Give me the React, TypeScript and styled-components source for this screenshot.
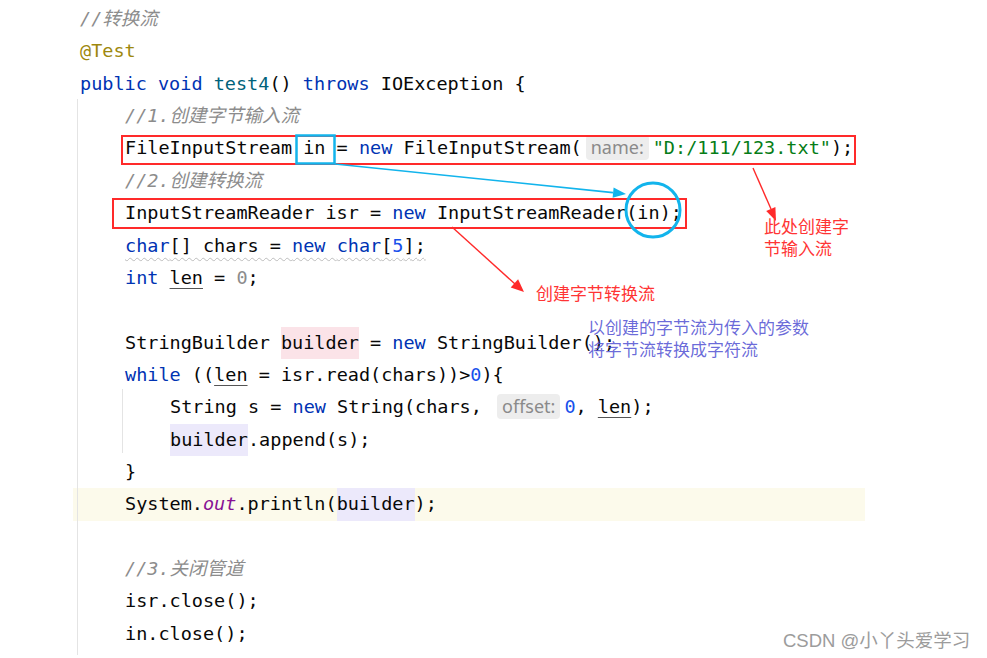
import React from "react";
import styled, { createGlobalStyle } from "styled-components";

const LINE_H = 32.37;

const Global = createGlobalStyle`
  html, body { margin: 0; padding: 0; background: #ffffff; }
  body { width: 987px; height: 658px; overflow: hidden; font-family: "Noto Sans", "Noto Sans CJK SC", sans-serif; }
`;

const Page = styled.div`
  position: relative;
  display: flex;
  flex-direction: column;
  width: 987px;
  height: 658px;
  background: #ffffff;
  padding: 3px 0 0 73px;
  box-sizing: border-box;
`;

const Editor = styled.div`
  position: relative;
  display: flex;
  flex-direction: column;
  width: 792px;
  font-family: "DejaVu Sans Mono", "Noto Sans CJK SC", monospace;
  font-size: 18.5px;
  color: #080808;
`;

const Line = styled.div<{ $level: number; $current?: boolean }>`
  height: ${LINE_H}px;
  line-height: ${LINE_H}px;
  white-space: pre;
  padding-left: ${(p) => 7 + p.$level * 45}px;
  background: ${(p) => (p.$current ? "#fcfaeb" : "transparent")};
`;

type Kind =
  | "plain"
  | "kw"
  | "fn"
  | "anno"
  | "comment"
  | "str"
  | "num"
  | "gray"
  | "field"
  | "under"
  | "pink"
  | "lav"
  | "hint";

const colors: Record<string, string> = {
  plain: "#080808",
  kw: "#0033b3",
  fn: "#00627a",
  anno: "#9e880d",
  comment: "#8c8c8c",
  str: "#067d17",
  num: "#1750eb",
  gray: "#8c8c8c",
  field: "#871094",
  under: "#080808",
  pink: "#080808",
  lav: "#080808",
};

const Tok = styled.span<{ $kind: Kind }>`
  color: ${(p) => colors[p.$kind]};
  font-style: ${(p) => (p.$kind === "comment" || p.$kind === "field" ? "italic" : "normal")};
  ${(p) =>
    p.$kind === "under"
      ? `text-decoration: underline; text-decoration-thickness: 1px; text-underline-offset: 4px; text-decoration-color: #555;`
      : ""}
  ${(p) =>
    p.$kind === "pink" || p.$kind === "lav"
      ? `display: inline-block; height: ${LINE_H}px; vertical-align: top; background: ${
          p.$kind === "pink" ? "#fbe3e8" : "#ece9fb"
        };`
      : ""}
`;

const Hint = styled.span`
  display: inline-block;
  vertical-align: middle;
  height: 25px;
  line-height: 25px;
  margin: -3px 4px 0 4px;
  padding: 0 5px;
  border-radius: 4px;
  background: #ededed;
  color: #8a8a8a;
  font-family: "Noto Sans", sans-serif;
  font-size: 18px;
`;

const Wavy = styled.span`
  text-decoration: underline wavy #bdbdbd;
  text-decoration-thickness: 1px;
  text-underline-offset: 5px;
`;

const Guide = styled.div<{ $x: number; $top: number; $h: number }>`
  position: absolute;
  left: ${(p) => p.$x}px;
  top: ${(p) => p.$top}px;
  width: 1px;
  height: ${(p) => p.$h}px;
  background: #e4e4e4;
`;

const Note = styled.div<{ $color: string }>`
  position: absolute;
  font-family: "Noto Sans CJK SC", sans-serif;
  font-size: 17px;
  line-height: 22px;
  color: ${(p) => p.$color};
  white-space: pre;
`;

const Watermark = styled.div`
  position: absolute;
  left: 783px;
  top: 626px;
  font-family: "Liberation Sans", "Noto Sans CJK SC", sans-serif;
  font-size: 18.5px;
  color: #9c9c9c;
  text-shadow: 0 0 1px #fff;
`;

const Overlay = styled.svg`
  position: absolute;
  left: 0;
  top: 0;
  pointer-events: none;
`;

type T = [Kind, string];
type L = { level: number; toks: T[]; wavy?: boolean; current?: boolean };

const lines: L[] = [
  { level: 0, toks: [["comment", "//转换流"]] },
  { level: 0, toks: [["anno", "@Test"]] },
  {
    level: 0,
    toks: [
      ["kw", "public "],
      ["kw", "void "],
      ["fn", "test4"],
      ["plain", "() "],
      ["kw", "throws "],
      ["plain", "IOException {"],
    ],
  },
  { level: 1, toks: [["comment", "//1.创建字节输入流"]] },
  {
    level: 1,
    toks: [
      ["plain", "FileInputStream in = "],
      ["kw", "new "],
      ["plain", "FileInputStream("],
      ["hint", "name:"],
      ["str", '"D:/111/123.txt"'],
      ["plain", ");"],
    ],
  },
  { level: 1, toks: [["comment", "//2.创建转换流"]] },
  {
    level: 1,
    toks: [
      ["plain", "InputStreamReader isr = "],
      ["kw", "new "],
      ["plain", "InputStreamReader(in);"],
    ],
  },
  {
    level: 1,
    wavy: true,
    toks: [
      ["kw", "char"],
      ["plain", "[] chars = "],
      ["kw", "new "],
      ["kw", "char"],
      ["plain", "["],
      ["num", "5"],
      ["plain", "];"],
    ],
  },
  {
    level: 1,
    toks: [
      ["kw", "int "],
      ["under", "len"],
      ["plain", " = "],
      ["gray", "0"],
      ["plain", ";"],
    ],
  },
  { level: 1, toks: [] },
  {
    level: 1,
    toks: [
      ["plain", "StringBuilder "],
      ["pink", "builder"],
      ["plain", " = "],
      ["kw", "new "],
      ["plain", "StringBuilder();"],
    ],
  },
  {
    level: 1,
    toks: [
      ["kw", "while "],
      ["plain", "(("],
      ["under", "len"],
      ["plain", " = isr.read(chars))>"],
      ["num", "0"],
      ["plain", "){"],
    ],
  },
  {
    level: 2,
    toks: [
      ["plain", "String s = "],
      ["kw", "new "],
      ["plain", "String(chars, "],
      ["hint", "offset:"],
      ["num", "0"],
      ["plain", ", "],
      ["under", "len"],
      ["plain", ");"],
    ],
  },
  {
    level: 2,
    toks: [
      ["lav", "builder"],
      ["plain", ".append(s);"],
    ],
  },
  { level: 1, toks: [["plain", "}"]] },
  {
    level: 1,
    current: true,
    toks: [
      ["plain", "System."],
      ["field", "out"],
      ["plain", ".println("],
      ["lav", "builder"],
      ["plain", ");"],
    ],
  },
  { level: 1, toks: [] },
  { level: 1, toks: [["comment", "//3.关闭管道"]] },
  { level: 1, toks: [["plain", "isr.close();"]] },
  { level: 1, toks: [["plain", "in.close();"]] },
];

const renderToks = (toks: T[]) =>
  toks.map(([k, t], i) =>
    k === "hint" ? (
      <Hint key={i}>{t}</Hint>
    ) : (
      <Tok key={i} $kind={k}>
        {t}
      </Tok>
    )
  );

export default function App() {
  return (
    <Page>
      <Global />
      <Editor>
        <Guide $x={4} $top={96} $h={556} />
        <Guide $x={49} $top={386} $h={64} />
        {lines.map((l, i) => (
          <Line key={i} $level={l.level} $current={l.current}>
            {l.wavy ? <Wavy>{renderToks(l.toks)}</Wavy> : renderToks(l.toks)}
            {l.toks.length === 0 ? " " : null}
          </Line>
        ))}
      </Editor>

      <Overlay width="987" height="658" viewBox="0 0 987 658">
        <rect x="122" y="136" width="733" height="28" fill="none" stroke="#ff2a2a" strokeWidth="2" />
        <rect x="113" y="199" width="573" height="29" fill="none" stroke="#ff2a2a" strokeWidth="2" />
        <rect x="296.5" y="135.5" width="38" height="28" fill="none" stroke="#12b4ec" strokeWidth="2.5" />
        <circle cx="653" cy="210" r="27" fill="none" stroke="#12b4ec" strokeWidth="3" />
        <line x1="335" y1="164" x2="613" y2="192.6" stroke="#12b4ec" strokeWidth="1.6" />
        <polygon points="626,194 612.6,197.8 613.6,187.4" fill="#12b4ec" />
        <line x1="753" y1="168" x2="771" y2="209" stroke="#ff2a2a" strokeWidth="1.4" />
        <polygon points="776,221 766.2,211.1 775.4,207.1" fill="#ff2a2a" />
        <line x1="452" y1="227" x2="515" y2="284" stroke="#ff2a2a" strokeWidth="1.4" />
        <polygon points="524,292 510.7,287.4 518.1,279.2" fill="#ff2a2a" />
      </Overlay>

      <Note $color="#ff3434" style={{ left: 764, top: 215 }}>{"此处创建字\n节输入流"}</Note>
      <Note $color="#ff3434" style={{ left: 536, top: 282 }}>创建字节转换流</Note>
      <Note $color="rgba(80,80,210,0.85)" style={{ left: 588, top: 316 }}>
        {"以创建的字节流为传入的参数\n将字节流转换成字符流"}
      </Note>

      <Watermark>CSDN @小丫头爱学习</Watermark>
    </Page>
  );
}
